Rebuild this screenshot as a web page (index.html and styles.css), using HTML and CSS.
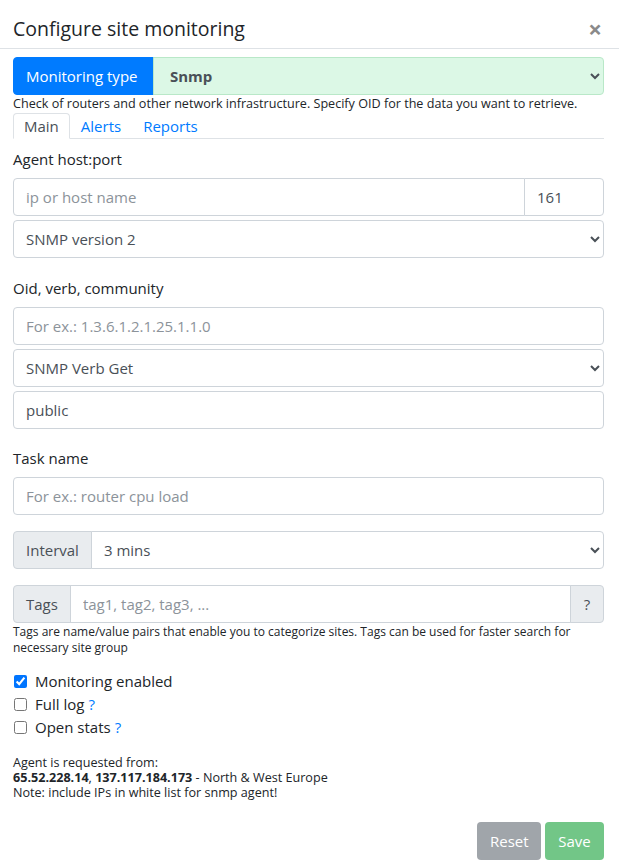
FILE: index.html
```html
<!DOCTYPE html>
<html>
<head>
<meta charset="utf-8">
<link rel="stylesheet" href="styles.css">
</head>
<body>
<div class="modal">
  <div class="modal-header">
    <h5 class="modal-title">Configure site monitoring</h5>
    <span class="close">&times;</span>
  </div>
  <div class="modal-body">
    <div class="input-group type-group">
      <span class="addon addon-primary">Monitoring type</span>
      <select class="control select type-select"><option>Snmp</option></select>
    </div>
    <div class="help type-help">Check of routers and other network infrastructure. Specify OID for the data you want to retrieve.</div>
    <ul class="tabs">
      <li class="tab active">Main</li>
      <li class="tab">Alerts</li>
      <li class="tab">Reports</li>
    </ul>

    <label class="label first">Agent host:port</label>
    <div class="input-group">
      <input class="control grow" placeholder="ip or host name">
      <input class="control port" value="161">
    </div>
    <select class="control select stack"><option>SNMP version 2</option></select>

    <label class="label">Oid, verb, community</label>
    <input class="control block" placeholder="For ex.: 1.3.6.1.2.1.25.1.1.0">
    <select class="control select stack"><option>SNMP Verb Get</option></select>
    <input class="control block stack" value="public">

    <label class="label task">Task name</label>
    <input class="control block" placeholder="For ex.: router cpu load">

    <div class="input-group spaced">
      <span class="addon">Interval</span>
      <select class="control select grow"><option>3 mins</option></select>
    </div>

    <div class="input-group spaced">
      <span class="addon">Tags</span>
      <input class="control grow" placeholder="tag1, tag2, tag3, ...">
      <span class="addon addon-end">?</span>
    </div>
    <div class="help tags-help">Tags are name/value pairs that enable you to categorize sites. Tags can be used for faster search for necessary site group</div>

    <div class="checks">
      <label class="check"><input type="checkbox" checked> Monitoring enabled</label>
      <label class="check"><input type="checkbox"> Full log <span class="q">?</span></label>
      <label class="check"><input type="checkbox"> Open stats <span class="q">?</span></label>
    </div>

    <div class="agent">
      <div class="agent-line">Agent is requested from:</div>
      <div class="agent-line"><b>65.52.228.14</b>, <b>137.117.184.173</b> - North &amp; West Europe</div>
      <div class="agent-line">Note: include IPs in white list for snmp agent!</div>
    </div>

    <div class="footer">
      <button class="btn btn-reset">Reset</button>
      <button class="btn btn-save">Save</button>
    </div>
  </div>
</div>
</body>
</html>
```

FILE: styles.css
```css
* { box-sizing: border-box; }
html, body {
  margin: 0;
  padding: 0;
  background: #fff;
}
body {
  font-family: "Open Sans", "Noto Sans", sans-serif;
  font-size: 15px;
  color: #212529;
  width: 619px;
}
.modal-header {
  display: flex;
  align-items: center;
  justify-content: space-between;
  height: 49px;
  padding: 14px 17px 4px 13px;
  border-bottom: 1px solid #dee2e6;
}
.modal-title {
  margin: 0;
  font-size: 19.5px;
  font-weight: 500;
  line-height: 30px;
  color: #212529;
}
.close {
  font-size: 24px;
  line-height: 24px;
  font-weight: 700;
  color: #8a8a8a;
}
.modal-body {
  padding: 8px 15px 0 13px;
}
.input-group {
  display: flex;
  height: 38px;
}
.addon {
  display: flex;
  align-items: center;
  padding: 0 12px;
  background: #e9ecef;
  border: 1px solid #ced4da;
  border-radius: 4px 0 0 4px;
  color: #495057;
  white-space: nowrap;
}
.addon-end {
  border-radius: 0 4px 4px 0;
  width: 34px;
  justify-content: center;
  padding: 0;
}
.addon-primary {
  background: #007bff;
  border-color: #007bff;
  color: #fff;
  width: 141px;
}
.control {
  display: block;
  height: 38px;
  font-family: inherit;
  font-size: 15px;
  color: #495057;
  background: #fff;
  border: 1px solid #ced4da;
  border-radius: 4px;
  padding: 0 12px;
  outline: none;
}
.control::placeholder { color: #8c939a; }
.select { padding: 0 8px; }
.block, .stack { width: 100%; }
.stack { margin-top: 4px; }
.grow { flex: 1; min-width: 0; }
.input-group .control { border-radius: 0; }
.input-group > :first-child { border-radius: 4px 0 0 4px; }
.input-group > :last-child { border-radius: 0 4px 4px 0; }
.input-group > * + * { margin-left: -1px; }
.port { width: 80px; }
.type-select {
  flex: 1;
  background: #dcf8e6;
  border-color: #b9e8c8;
  font-weight: 700;
  padding-left: 12px;
}
.help {
  font-size: 12px;
  line-height: 17px;
  color: #212529;
}
.type-help { font-size: 12.6px; }
.tabs {
  list-style: none;
  margin: 1px 0 0;
  padding: 0;
  display: flex;
  border-bottom: 1px solid #dee2e6;
  height: 26px;
}
.tab {
  padding: 0 10px;
  line-height: 24px;
  color: #007bff;
  border: 1px solid transparent;
  border-radius: 4px 4px 0 0;
  margin-bottom: -1px;
}
.tab.active {
  color: #495057;
  border-color: #dee2e6 #dee2e6 #fff;
  background: #fff;
}
.label {
  display: block;
  line-height: 24px;
  margin: 18px 0 7px;
}
.label.first { margin-top: 8px; }
.label.task { margin-top: 17px; }
.spaced { margin-top: 16px; }
.tags-help {
  line-height: 16px;
  margin-top: 1px;
}
.checks {
  margin-top: 14px;
  display: flex;
  flex-direction: column;
}
.check {
  display: flex;
  align-items: center;
  line-height: 23px;
}
.check input {
  margin: 0 8px 0 1px;
  width: 13px;
  height: 13px;
}
.q { color: #007bff; margin-left: 4px; }
.agent {
  margin-top: 16px;
  font-size: 12.6px;
}
.agent-line {
  height: 15px;
  line-height: 15px;
  white-space: nowrap;
}
.footer {
  display: flex;
  justify-content: flex-end;
  gap: 4px;
  margin-top: 22px;
}
.btn {
  height: 38px;
  padding: 0 12px;
  border-radius: 4px;
  border: 1px solid transparent;
  color: #fff;
  font-family: inherit;
  font-size: 15px;
}
.btn-reset { background: #a0a5aa; width: 64px; }
.btn-save { background: #72c687; width: 59px; }
```
